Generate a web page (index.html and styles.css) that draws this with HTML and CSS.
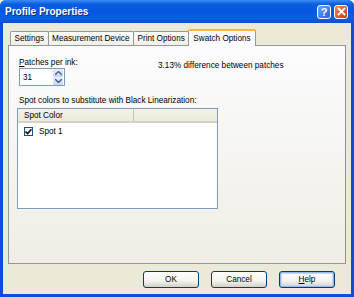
FILE: index.html
```html
<!DOCTYPE html>
<html>
<head>
<meta charset="utf-8">
<link rel="stylesheet" href="styles.css">
</head>
<body>
<div class="window">
  <div class="titlebar">
    <span class="title">Profile Properties</span>
    <div class="caption-btns">
      <span class="cbtn help">?</span>
      <span class="cbtn close">
        <svg width="9" height="9" viewBox="0 0 9 9"><path d="M1.5 1.5 L7.5 7.5 M7.5 1.5 L1.5 7.5" stroke="#fff" stroke-width="1.8" stroke-linecap="square"/></svg>
      </span>
    </div>
  </div>
  <div class="client">
    <div class="tabs">
      <span class="tab">Settings</span>
      <span class="tab">Measurement Device</span>
      <span class="tab">Print Options</span>
      <span class="tab active">Swatch Options</span>
    </div>
    <div class="panel">
      <div class="row1">
        <div class="field">
          <label class="lbl"><u>P</u>atches per ink:</label>
          <div class="spin">
            <span class="spin-val">31</span>
            <span class="spin-btns">
              <span class="sb"><svg width="7" height="4" viewBox="0 0 7 4"><path d="M0 4 L3.5 0.5 L7 4" fill="none" stroke="#4d6185" stroke-width="1.4"/></svg></span>
              <span class="sb"><svg width="7" height="4" viewBox="0 0 7 4"><path d="M0 0 L3.5 3.5 L7 0" fill="none" stroke="#4d6185" stroke-width="1.4"/></svg></span>
            </span>
          </div>
        </div>
        <span class="diff">3.13% difference between patches</span>
      </div>
      <div class="lbl spot-lbl">Spot colors to substitute with Black Linearization:</div>
      <div class="listview">
        <div class="lv-head">
          <span class="col1">Spot Color</span>
          <span class="col2"></span>
        </div>
        <div class="lv-row">
          <span class="chk"><svg width="7" height="7" viewBox="0 0 7 7"><path d="M0.5 3.5 L2.6 5.6 L6.5 1.2" fill="none" stroke="#111" stroke-width="1.6"/></svg></span>
          <span>Spot 1</span>
        </div>
      </div>
    </div>
    <div class="buttons">
      <span class="btn">OK</span>
      <span class="btn">Cancel</span>
      <span class="btn default"><u>H</u>elp</span>
    </div>
  </div>
</div>
</body>
</html>
```

FILE: styles.css
```css
* { box-sizing: border-box; }
html, body { margin: 0; padding: 0; }
body {
  width: 354px;
  height: 297px;
  overflow: hidden;
  font-family: "Liberation Sans", Arial, sans-serif;
  font-size: 8.2px;
  color: #000;
}
.window {
  width: 354px;
  height: 297px;
  display: flex;
  flex-direction: column;
  background: #0b4fd9;
  border-radius: 6px 6px 0 0;
  overflow: hidden;
}
.titlebar {
  height: 23px;
  flex: none;
  display: flex;
  align-items: center;
  justify-content: space-between;
  padding: 0 6px 0 5px;
  background: linear-gradient(#3c8cf6 0%, #0a5fe0 18%, #0656e0 50%, #0a5fe4 80%, #0b4fd4 100%);
}
.title {
  color: #fff;
  font-family: "Liberation Sans", Arial, sans-serif;
  font-weight: bold;
  font-size: 10px;
  text-shadow: 1px 1px 0 #0a2d8a;
}
.caption-btns { display: flex; gap: 3px; }
.cbtn {
  width: 14px;
  height: 14px;
  border: 1px solid #fff;
  border-radius: 3px;
  display: flex;
  align-items: center;
  justify-content: center;
  color: #fff;
  font-family: "Liberation Sans", Arial, sans-serif;
  font-weight: bold;
  font-size: 11px;
}
.cbtn.help { background: linear-gradient(135deg, #6aa4ff, #2462e0); }
.cbtn.close { background: linear-gradient(135deg, #ee8a62, #c83a14); }
.client {
  flex: 1;
  margin: 0 3px 3px 3px;
  background: #ece9d8;
  display: flex;
  flex-direction: column;
  padding: 6px 5px 0 5px;
}
.tabs {
  display: flex;
  align-items: flex-end;
  padding-left: 2px;
  height: 16px;
  flex: none;
}
.tab {
  height: 14px;
  padding: 0 3.5px;
  border: 1px solid #919b9c;
  border-bottom: none;
  border-radius: 2px 2px 0 0;
  background: linear-gradient(#fdfdfc, #f1efe6);
  display: flex;
  align-items: center;
  margin-right: -1px;
}
.tab.active {
  background: #fcfcfe;
  border-top: 2px solid #f9b83a;
  padding: 0 4px;
  position: relative;
  z-index: 1;
  margin-bottom: -1px;
  height: 17px;
}
.panel {
  height: 219px;
  flex: none;
  border: 1px solid #919b9c;
  border-right-color: #8c9394;
  background: linear-gradient(#fcfcfe, #f4f3ee 60%, #efede5);
  padding: 12px 10px 0 10px;
}
.row1 {
  display: flex;
  align-items: flex-start;
}
.field { display: flex; flex-direction: column; gap: 1px; width: 139px; }
.diff { padding-top: 3px; }
.spin {
  width: 46px;
  height: 18px;
  background: #fff;
  border: 1px solid #7f9db9;
  display: flex;
  align-items: center;
  justify-content: space-between;
  padding-left: 3px;
}
.spin-btns { display: flex; flex-direction: column; gap: 0; margin-right: 1px; }
.sb {
  width: 10px;
  height: 8px;
  background: linear-gradient(#e6eefc, #c4d4f6);
  border-radius: 1px;
  display: flex;
  align-items: center;
  justify-content: center;
}
.spot-lbl { margin-top: 10px; }
.listview {
  margin-top: 3px;
  width: 201px;
  height: 101px;
  background: #fff;
  border: 1px solid #7f9db9;
  margin-left: -2px;
}
.lv-head {
  display: flex;
  height: 14px;
  background: linear-gradient(#f3f2ea, #ebeadb);
  border-bottom: 2px solid #d6d2c2;
}
.col1 {
  width: 116px;
  padding-left: 6px;
  display: flex;
  align-items: center;
  border-right: 1px solid #c7c5b2;
}
.lv-row {
  display: flex;
  align-items: center;
  gap: 6px;
  padding: 4px 0 0 6px;
}
.chk {
  width: 9px;
  height: 9px;
  border: 1px solid #1c5180;
  background: #f4f4f0;
  display: flex;
  align-items: center;
  justify-content: center;
}
.buttons {
  display: flex;
  justify-content: flex-end;
  gap: 12px;
  padding: 7px 11px 0 0;
}
.btn {
  width: 56px;
  height: 17px;
  border: 1px solid #003c74;
  border-radius: 3px;
  background: linear-gradient(#ffffff, #f3f3ef 60%, #d6d0c5);
  display: flex;
  align-items: center;
  justify-content: center;
}
.btn.default {
  box-shadow: inset 0 0 0 1px #98b8ea, inset 0 0 0 2px #c6d8f6;
}
```
